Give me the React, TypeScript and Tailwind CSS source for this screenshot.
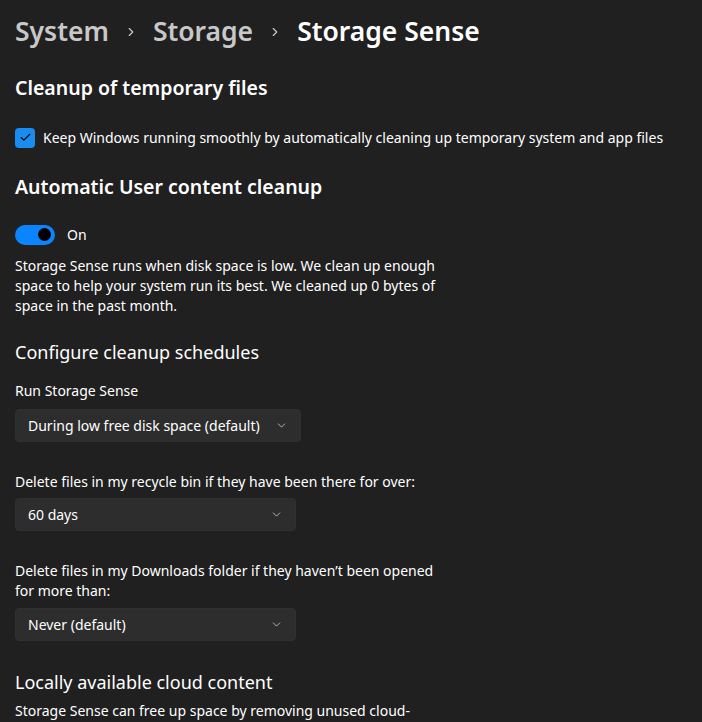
import { ChevronRight, ChevronDown, Check } from "lucide-react";

function Dropdown({ label, width }: { label: string; width: string }) {
  return (
    <div
      className={`flex h-[33px] items-center justify-between rounded-[4px] border border-[#303030] bg-[#2d2d2d] pl-3 pr-3 text-[14px] text-white ${width}`}
    >
      <span>{label}</span>
      <ChevronDown size={13} strokeWidth={1.5} className="text-[#cfcfcf]" />
    </div>
  );
}

export default function App() {
  return (
    <div className="h-[722px] w-[702px] overflow-hidden bg-[#202020] px-[15px] font-['Noto_Sans',sans-serif] text-white">
      <div className="flex h-[64px] items-center text-[26.5px] font-semibold">
        <span className="text-[#c8c8c8]">System</span>
        <ChevronRight size={14} strokeWidth={2} className="mx-[15px] text-[#c8c8c8]" />
        <span className="text-[#c8c8c8]">Storage</span>
        <ChevronRight size={14} strokeWidth={2} className="mx-[15px] text-[#c8c8c8]" />
        <span>Storage Sense</span>
      </div>

      <h2 className="mt-[10px] text-[19.5px] font-semibold leading-[28px]">Cleanup of temporary files</h2>

      <label className="mt-[25px] flex items-center gap-[8px] text-[14px]">
        <span className="flex h-[20px] w-[20px] items-center justify-center rounded-[4px] bg-[#1a8cf0]">
          <Check size={13} strokeWidth={2} className="text-black" />
        </span>
        <span>Keep Windows running smoothly by automatically cleaning up temporary system and app files</span>
      </label>

      <h2 className="mt-[25px] text-[19.5px] font-semibold leading-[28px]">Automatic User content cleanup</h2>

      <div className="mt-[23px] flex items-center gap-[12px] text-[14px]">
        <span className="flex h-[20px] w-[40px] items-center justify-end rounded-full bg-[#0a84ff] pr-[4px]">
          <span className="h-[13px] w-[13px] rounded-full bg-black" />
        </span>
        <span>On</span>
      </div>

      <p className="mt-[11px] w-[440px] text-[14px] leading-[20px]">
        Storage Sense runs when disk space is low. We clean up enough space to help your system run its best. We
        cleaned up 0 bytes of space in the past month.
      </p>

      <h3 className="mt-[22px] text-[18px] leading-[28px]">Configure cleanup schedules</h3>

      <p className="mt-[15px] text-[14px] leading-[20px]">Run Storage Sense</p>
      <div className="mt-[8px]">
        <Dropdown label="During low free disk space (default)" width="w-[286px]" />
      </div>

      <p className="mt-[30px] text-[14px] leading-[20px]">
        Delete files in my recycle bin if they have been there for over:
      </p>
      <div className="mt-[6px]">
        <Dropdown label="60 days" width="w-[281px]" />
      </div>

      <p className="mt-[30px] w-[440px] text-[14px] leading-[20px]">
        Delete files in my Downloads folder if they haven’t been opened for more than:
      </p>
      <div className="mt-[7px]">
        <Dropdown label="Never (default)" width="w-[281px]" />
      </div>

      <h3 className="mt-[27px] text-[18px] leading-[28px]">Locally available cloud content</h3>
      <p className="mt-[5px] w-[440px] text-[14px] leading-[20px]">
        Storage Sense can free up space by removing unused cloud-backed content from your device.
      </p>
    </div>
  );
}
